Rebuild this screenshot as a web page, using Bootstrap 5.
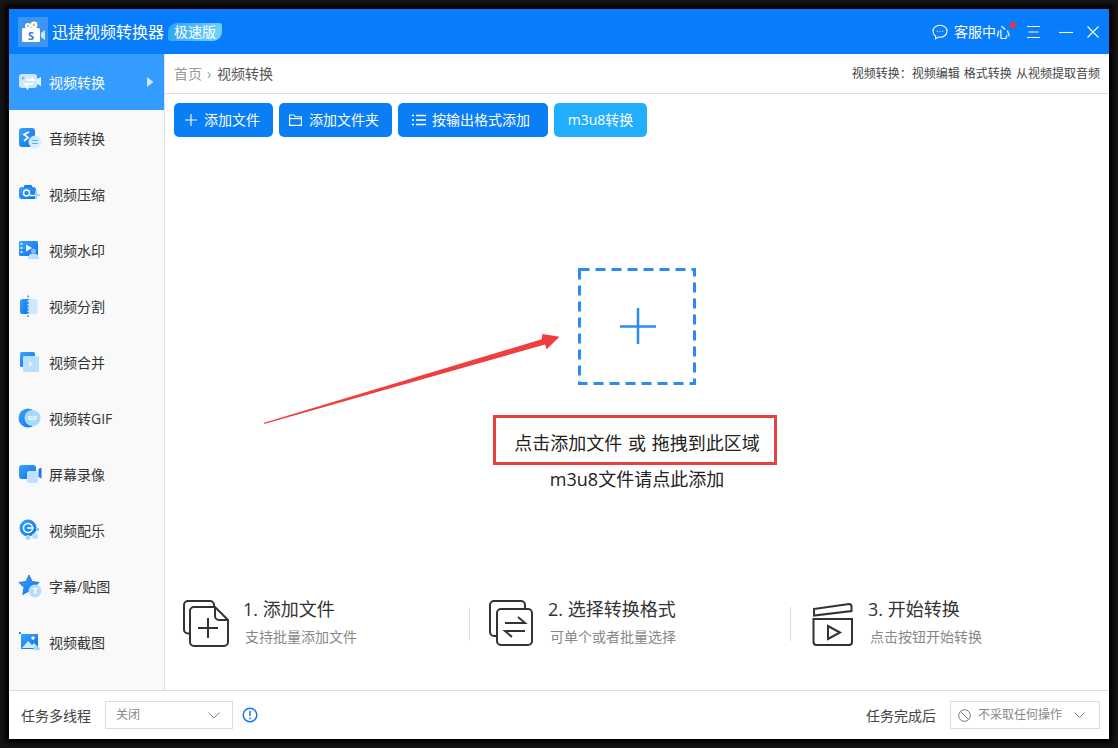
<!DOCTYPE html>
<html lang="zh-CN">
<head>
<meta charset="utf-8">
<title>迅捷视频转换器</title>
<link href="https://cdn.jsdelivr.net/npm/bootstrap@5.3.0/dist/css/bootstrap.min.css" rel="stylesheet">
<style>
html,body{height:100%;overflow:hidden}
body{background:#151515;font-family:"Open Sans","Noto Sans CJK SC",sans-serif;color:#333;position:relative;width:1118px;height:748px}
.app{width:1100px;height:730px;margin:9px 0 0 9px;background:#fff;box-shadow:0 0 5px 4px #000}
.app-head{height:45px;background:#077dfb;color:#fff;padding:0 10px 0 9px;flex:none}
.logo{width:30px;height:30px;background:#3d95ee}
.app-title{font-size:16px;margin-left:4px;line-height:1}
.tag{width:54px;height:18px;margin-left:4px;font-size:14px;line-height:18px;text-align:center;color:#fff;background:linear-gradient(100deg,#2fa5f5,#74d2ff);border-radius:9px 3px 9px 3px}
.svc{font-size:14px;margin-left:6px}
.dot{width:6px;height:6px;background:#f5333f;top:1px;right:-6px}
.m-menu{margin-left:17px}.m-min{margin-left:19px}.m-close{margin-left:14px}
.app-body{height:636px}
.side{width:156px;background:#f9f9f9;border-right:1px solid #ddd;flex:none}
.side .nav-link{height:56px;padding:0 0 0 9px;gap:7px;color:#333;font-size:14px}
.side .nav-link.active{background:#359cff;color:#fff;padding-right:10px}
.side .nav-link svg{flex:none}
.crumbs{height:40px;border-bottom:1px solid #ddd;padding:0 9px;flex:none}
.crumbs .breadcrumb{--bs-breadcrumb-margin-bottom:0;--bs-breadcrumb-item-padding-x:5px;--bs-breadcrumb-divider:"›";font-size:14px}
.crumbs .breadcrumb-item{color:#999}
.crumbs .breadcrumb-item.active{color:#555}
.crumbs .breadcrumb-item+.breadcrumb-item::before{width:10px;padding-right:5px;color:#999}
.links{font-size:12px;color:#444;word-spacing:1px}
.tools{padding:9px 9px 0;gap:6px}
.tools .btn{height:34px;font-size:14px;border:0;border-radius:5px;--bs-btn-bg:#0a7ef5;--bs-btn-hover-bg:#0a7ef5;color:#fff;line-height:1;gap:7px}
.b1{width:99px;padding:0 0 0 11px}
.b2{width:113px;padding:0 0 0 10px}
.b3{width:150px;padding:0 0 0 14px;gap:6px!important}
.tools .b4{width:93px;padding:0;--bs-btn-bg:#21aeff;--bs-btn-hover-bg:#21aeff;justify-content:center}
.drop{margin-top:131px;line-height:0}
.hint{font-size:18px;line-height:36px;color:#222;text-align:center;word-spacing:1px}
.hint1{margin-top:40px}
.steps{margin-top:auto;padding:0 0 43px 18px}
.step{gap:15px}
.step svg{margin-top:3px;flex:none}
.step h6{font-size:18px;line-height:24px;font-weight:400;color:#333;margin:0 0 6px}
.step p{font-size:14px;line-height:20px;color:#888;margin:0 0 0 2px;white-space:nowrap}
.s1{width:286px;gap:14px}.s2{width:301px;margin-left:19px}.s3{margin-left:21px}
.vline{width:1px;height:34px;background:#ddd;margin-top:10px;flex:none}
.foot{height:49px;border-top:1px solid #ddd;padding:0 9px 0 12px;font-size:14px;color:#444;flex:none}
.pick{height:28px;border:1px solid #ddd;font-size:12px;color:#888;background:#fff}
.p1{width:128px;margin-left:14px;padding:0 12px 0 10px}
.p2{width:150px;margin-left:14px;padding:0 14px 0 7px;gap:7px}
.m-info{margin-left:9px}
.annot{width:284px;height:50px;left:493px;top:415px;border:3px solid #e8413f}
.arrow{left:0;top:0;width:1118px;height:748px;pointer-events:none}
</style>
</head>
<body>
<svg width="0" height="0" class="position-absolute">
<defs>
<linearGradient id="g1" x1="0" y1="0" x2="1" y2="1"><stop offset="0" stop-color="#3ba4fb"/><stop offset="1" stop-color="#0b72e8"/></linearGradient>
<linearGradient id="g2" x1="0" y1="0" x2="1" y2="1"><stop offset="0" stop-color="#bfe3ff"/><stop offset="1" stop-color="#e3f3ff"/></linearGradient>
</defs>
</svg>
<div class="app d-flex flex-column">
  <header class="app-head d-flex align-items-center">
    <div class="logo d-flex align-items-center justify-content-center">
      <svg width="26" height="24" viewBox="0 0 26 24"><circle cx="8" cy="6" r="3" fill="#fff"/><circle cx="14" cy="5" r="3.4" fill="#fff"/><circle cx="14" cy="5" r="1.4" fill="#f5b63c"/><circle cx="8" cy="6" r="1.2" fill="#f5b63c"/><rect x="2" y="8" width="18" height="14" rx="1.5" fill="#fff"/><path d="M21 13l4-3v10l-4-3z" fill="#cfe6fb"/><text x="11" y="20" font-size="11" font-weight="700" fill="#2b7fd8" text-anchor="middle">S</text></svg>
    </div>
    <div class="app-title">迅捷视频转换器</div>
    <div class="tag">极速版</div>
    <div class="ms-auto d-flex align-items-center">
      <svg width="16" height="16" viewBox="0 0 16 16" fill="none" stroke="#fff" stroke-width="1.1"><path d="M8 1.2c3.9 0 7 2.6 7 6s-3.100 6-7 6c-.7 0-1.300-.1-1.900-.2L3.500 14.800V12C1.900 10.900 1 9.200 1 7.200c0-3.400 3.100-6 7-6z"/><path d="M5 7.400h.8M7.700 7.400h.8M10.400 7.400h.8"/></svg>
      <div class="svc position-relative">客服中心<span class="dot position-absolute rounded-circle"></span></div>
      <svg class="m-menu" width="13" height="14" viewBox="0 0 13 14" stroke="#fff" stroke-width="1"><path d="M0 1.500h13M1.500 7h10M0 12.500h13"/></svg>
      <svg class="m-min" width="14" height="14" viewBox="0 0 14 14" stroke="#fff" stroke-width="1.100"><path d="M0 7.500h14"/></svg>
      <svg class="m-close" width="12" height="12" viewBox="0 0 12 12" stroke="#fff" stroke-width="1.100"><path d="M.5.500l11 11M11.500.500l-11 11"/></svg>
    </div>
  </header>
  <div class="app-body d-flex">
    <nav class="side nav flex-column flex-nowrap">
      <a class="nav-link active d-flex align-items-center" href="#">
        <svg width="24" height="24" viewBox="0 0 24 24"><rect x="1" y="4" width="18" height="14" rx="3" fill="#cfe6ff"/><path d="M19 9l4-2v9l-4-2z" fill="#e8f4ff"/><circle cx="5" cy="8" r="1.600" fill="#7dbcff"/><path d="M8 10h8l-2.500-2.500M15 14H7l2.500 2.500 0 3" fill="none" stroke="#fff" stroke-width="1.600"/></svg>
        <span>视频转换</span>
        <svg class="ms-auto" width="7" height="10" viewBox="0 0 7 10"><path d="M0 0l6.500 5L0 10z" fill="#cfe5fc"/></svg>
      </a>
      <a class="nav-link d-flex align-items-center" href="#">
        <svg width="24" height="24" viewBox="0 0 24 24"><rect x="1" y="2" width="16" height="19" rx="3" fill="url(#g1)"/><path d="M11 6L6 8.500l4 3-4 3.500" fill="none" stroke="#fff" stroke-width="1.700"/><circle cx="17" cy="16" r="6.500" fill="url(#g2)"/><path d="M14 14.500h6M20 17.500h-6" stroke="#5aaefa" stroke-width="1.200"/></svg>
        <span>音频转换</span>
      </a>
      <a class="nav-link d-flex align-items-center" href="#">
        <svg width="24" height="24" viewBox="0 0 24 24"><path d="M4 5h11a3 3 0 0 1 3 3v9H4a3 3 0 0 1-3-3V8a3 3 0 0 1 3-3z" fill="url(#g1)"/><rect x="6" y="3" width="8" height="3" rx="1" fill="#1f83ef"/><circle cx="8.500" cy="11" r="3" fill="none" stroke="#fff" stroke-width="1.500"/><path d="M12 13.500h6" stroke="#fff" stroke-width="1.500"/><path d="M17 9h2v3h3v2h-3v3h-2z" fill="#a5d3ff"/></svg>
        <span>视频压缩</span>
      </a>
      <a class="nav-link d-flex align-items-center" href="#">
        <svg width="24" height="24" viewBox="0 0 24 24"><rect x="1" y="3" width="19" height="15" rx="1.500" fill="url(#g1)"/><path d="M2.500 5h2v2h-2zM2.500 9h2v2h-2zM2.500 13h2v2h-2z" fill="#cfe6ff"/><path d="M8 6.500l6 3.500-6 3.500z" fill="#fff"/><circle cx="15.500" cy="13" r="2.500" fill="#7dbcff"/><path d="M10 21c0-4 2.500-5.500 5.500-5.500S21 17 21 21z" fill="#bcdeff"/></svg>
        <span>视频水印</span>
      </a>
      <a class="nav-link d-flex align-items-center" href="#">
        <svg width="24" height="24" viewBox="0 0 24 24"><path d="M4.500 5h5v15h-5A2.500 2.500 0 0 1 2 17.500v-10A2.500 2.500 0 0 1 4.500 5z" fill="url(#g1)"/><path d="M10 5h7a2.500 2.500 0 0 1 2.500 2.500v10A2.500 2.500 0 0 1 17 20h-7z" fill="#cde7ff"/><path d="M10 1.500V23" stroke="#1273e3" stroke-width="1.300" stroke-dasharray="1.800 1.500"/></svg>
        <span>视频分割</span>
      </a>
      <a class="nav-link d-flex align-items-center" href="#">
        <svg width="24" height="24" viewBox="0 0 24 24"><rect x="2" y="2" width="15" height="15" rx="1.500" fill="url(#g1)"/><rect x="5" y="6" width="16" height="16" rx="1.500" fill="#b9dfff"/><path d="M11 11.500l4 2.500-4 2.500z" fill="#e9f5ff"/></svg>
        <span>视频合并</span>
      </a>
      <a class="nav-link d-flex align-items-center" href="#">
        <svg width="24" height="24" viewBox="0 0 24 24"><circle cx="10" cy="12" r="9.500" fill="url(#g1)"/><circle cx="14.500" cy="12" r="8" fill="#a9d8fd"/><text x="14.500" y="14" font-size="6" font-weight="700" fill="#fff" text-anchor="middle">GIF</text></svg>
        <span>视频转GIF</span>
      </a>
      <a class="nav-link d-flex align-items-center" href="#">
        <svg width="24" height="24" viewBox="0 0 24 24"><rect x="1" y="3" width="17" height="14" rx="3" fill="url(#g1)"/><rect x="9" y="9" width="11" height="12" rx="2" fill="#bfe0ff"/><path d="M20.500 7l3-1.500v11l-3-1.500z" fill="#1877ea"/></svg>
        <span>屏幕录像</span>
      </a>
      <a class="nav-link d-flex align-items-center" href="#">
        <svg width="24" height="24" viewBox="0 0 24 24"><circle cx="10" cy="10" r="8.500" fill="url(#g1)"/><circle cx="10" cy="10" r="4.500" fill="none" stroke="#fff" stroke-width="1.500"/><path d="M9 10h7" stroke="#fff" stroke-width="1.500"/><circle cx="10" cy="19.500" r="2.500" fill="#a9d6ff"/><circle cx="17" cy="18" r="3" fill="#bcdfff"/><path d="M18 10h3v3h-3z" fill="#8cc7ff"/></svg>
        <span>视频配乐</span>
      </a>
      <a class="nav-link d-flex align-items-center" href="#">
        <svg width="24" height="24" viewBox="0 0 24 24"><path d="M11 1l3 6.500 7 1-5 5 1.200 7-6.200-3.500L4.800 20.500 6 13.500 1 8.500l7-1z" fill="url(#g1)" stroke="#1a82ef" stroke-linejoin="round"/><circle cx="17" cy="17" r="6.500" fill="#b7ddff"/><text x="17" y="20" font-size="9" font-weight="700" fill="#fff" text-anchor="middle">T</text></svg>
        <span>字幕/贴图</span>
      </a>
      <a class="nav-link d-flex align-items-center" href="#">
        <svg width="24" height="24" viewBox="0 0 24 24"><rect x="3" y="4" width="17" height="15" fill="url(#g1)"/><path d="M1 2h2v2H1z" fill="#2b8ff0"/><path d="M4 18l6-7 4 4 2-2 5 5z" fill="#cfe7ff"/><circle cx="15" cy="8" r="1.700" fill="#fff"/><path d="M15 20c0-3 2-4 3.500-4s3.500 1 3.500 4z" fill="#a6d5ff"/></svg>
        <span>视频截图</span>
      </a>
    </nav>
    <main class="flex-grow-1 d-flex flex-column">
      <div class="crumbs d-flex align-items-center justify-content-between">
        <ol class="breadcrumb">
          <li class="breadcrumb-item">首页</li>
          <li class="breadcrumb-item active">视频转换</li>
        </ol>
        <div class="links">视频转换：视频编辑 格式转换 从视频提取音频</div>
      </div>
      <div class="tools d-flex">
        <button class="btn btn-primary b1 d-flex align-items-center">
          <svg width="12" height="12" viewBox="0 0 12 12" stroke="#fff" stroke-width="1.100"><path d="M0 6h12M6 0v12"/></svg>添加文件</button>
        <button class="btn btn-primary b2 d-flex align-items-center">
          <svg width="13" height="12" viewBox="0 0 13 12" fill="none" stroke="#fff" stroke-width="1.100"><path d="M.6 1h4.200l1.400 1.700h6.200v8.700H.6z"/><path d="M.6 4.600h12"/></svg>添加文件夹</button>
        <button class="btn btn-primary b3 d-flex align-items-center">
          <svg width="14" height="12" viewBox="0 0 14 12" stroke="#fff" stroke-width="1.300"><path d="M4 1.500h10M4 6h10M4 10.500h10M0 1.500h2M0 6h2M0 10.500h2"/></svg>按输出格式添加</button>
        <button class="btn btn-primary b4 d-flex align-items-center">m3u8转换</button>
      </div>
      <div class="d-flex flex-column align-items-center">
        <div class="drop">
          <svg width="118" height="117" viewBox="0 0 118 117" fill="none" stroke="#2a8cf0"><rect x="1.500" y="1.500" width="115" height="114" stroke-width="3" stroke-dasharray="10 6"/><path d="M42 58.500h36M60 40v36" stroke-width="2.500"/></svg>
        </div>
        <div class="hint hint1">点击添加文件 或 拖拽到此区域</div>
        <div class="hint">m3u8文件请点此添加</div>
      </div>
      <div class="steps d-flex">
        <div class="step s1 d-flex">
          <svg width="46" height="47" viewBox="0 0 46 47" fill="none" stroke="#333" stroke-width="2"><path d="M6 33.500H5a4 4 0 0 1-4-4V5a4 4 0 0 1 4-4h22a4 4 0 0 1 4 4v2"/><path d="M11 7h21l13 13v22a4 4 0 0 1-4 4H11a4 4 0 0 1-4-4V11a4 4 0 0 1 4-4z" fill="#fff"/><path d="M32 7v9a4 4 0 0 0 4 4h9"/><path d="M15 28h20M25 18v20"/></svg>
          <div><h6>1. 添加文件</h6><p>支持批量添加文件</p></div>
        </div>
        <div class="vline"></div>
        <div class="step s2 d-flex">
          <svg width="44" height="47" viewBox="0 0 44 47" fill="none" stroke="#333" stroke-width="2"><path d="M7 36H5a4 4 0 0 1-4-4V5a4 4 0 0 1 4-4h27a4 4 0 0 1 4 4v4"/><rect x="8" y="9" width="35" height="36" rx="4" fill="#fff"/><path d="M16 23h20l-7-6M36 31H16l7 6"/></svg>
          <div><h6>2. 选择转换格式</h6><p>可单个或者批量选择</p></div>
        </div>
        <div class="vline"></div>
        <div class="step s3 d-flex">
          <svg width="41" height="47" viewBox="0 0 41 47" fill="none" stroke="#333" stroke-width="2"><path d="M2 9l35-5c1.500 0 2.500 1 2.500 2.500V11L2 15.500z"/><path d="M1.500 19h38.500v23a3 3 0 0 1-3 3H4.500a3 3 0 0 1-3-3z"/><path d="M16 26l12 6.500L16 39z"/></svg>
          <div><h6>3. 开始转换</h6><p>点击按钮开始转换</p></div>
        </div>
      </div>
    </main>
  </div>
  <footer class="foot d-flex align-items-center">
    <span>任务多线程</span>
    <div class="pick p1 d-flex align-items-center justify-content-between">
      <span>关闭</span>
      <svg width="12" height="7" viewBox="0 0 12 7" fill="none" stroke="#888"><path d="M.5.500L6 6 11.500.500"/></svg>
    </div>
    <svg class="m-info" width="16" height="16" viewBox="0 0 16 16" fill="none" stroke="#1576e6" stroke-width="1.500"><circle cx="8" cy="8" r="6.800"/><path d="M8 3.800v5.200M8 10.600v1.600"/></svg>
    <span class="ms-auto">任务完成后</span>
    <div class="pick p2 d-flex align-items-center">
      <svg width="13" height="13" viewBox="0 0 13 13" fill="none" stroke="#777"><circle cx="6.500" cy="6.500" r="5.800"/><path d="M2.500 2.500l8 8"/></svg>
      <span>不采取任何操作</span>
      <svg class="ms-auto" width="11" height="6" viewBox="0 0 11 6" fill="none" stroke="#888"><path d="M.5.500l5 5 5-5"/></svg>
    </div>
  </footer>
</div>
<div class="annot position-absolute"></div>
<svg class="arrow position-absolute" viewBox="0 0 1118 748"><path d="M264 422.800L541.700 339.300 542.300 334 559.500 336.700 546.700 349.300 545 344.500 264 424z" fill="#ee3e3e"/></svg>
<script src="https://cdn.jsdelivr.net/npm/bootstrap@5.3.0/dist/js/bootstrap.bundle.min.js"></script>
</body>
</html>
